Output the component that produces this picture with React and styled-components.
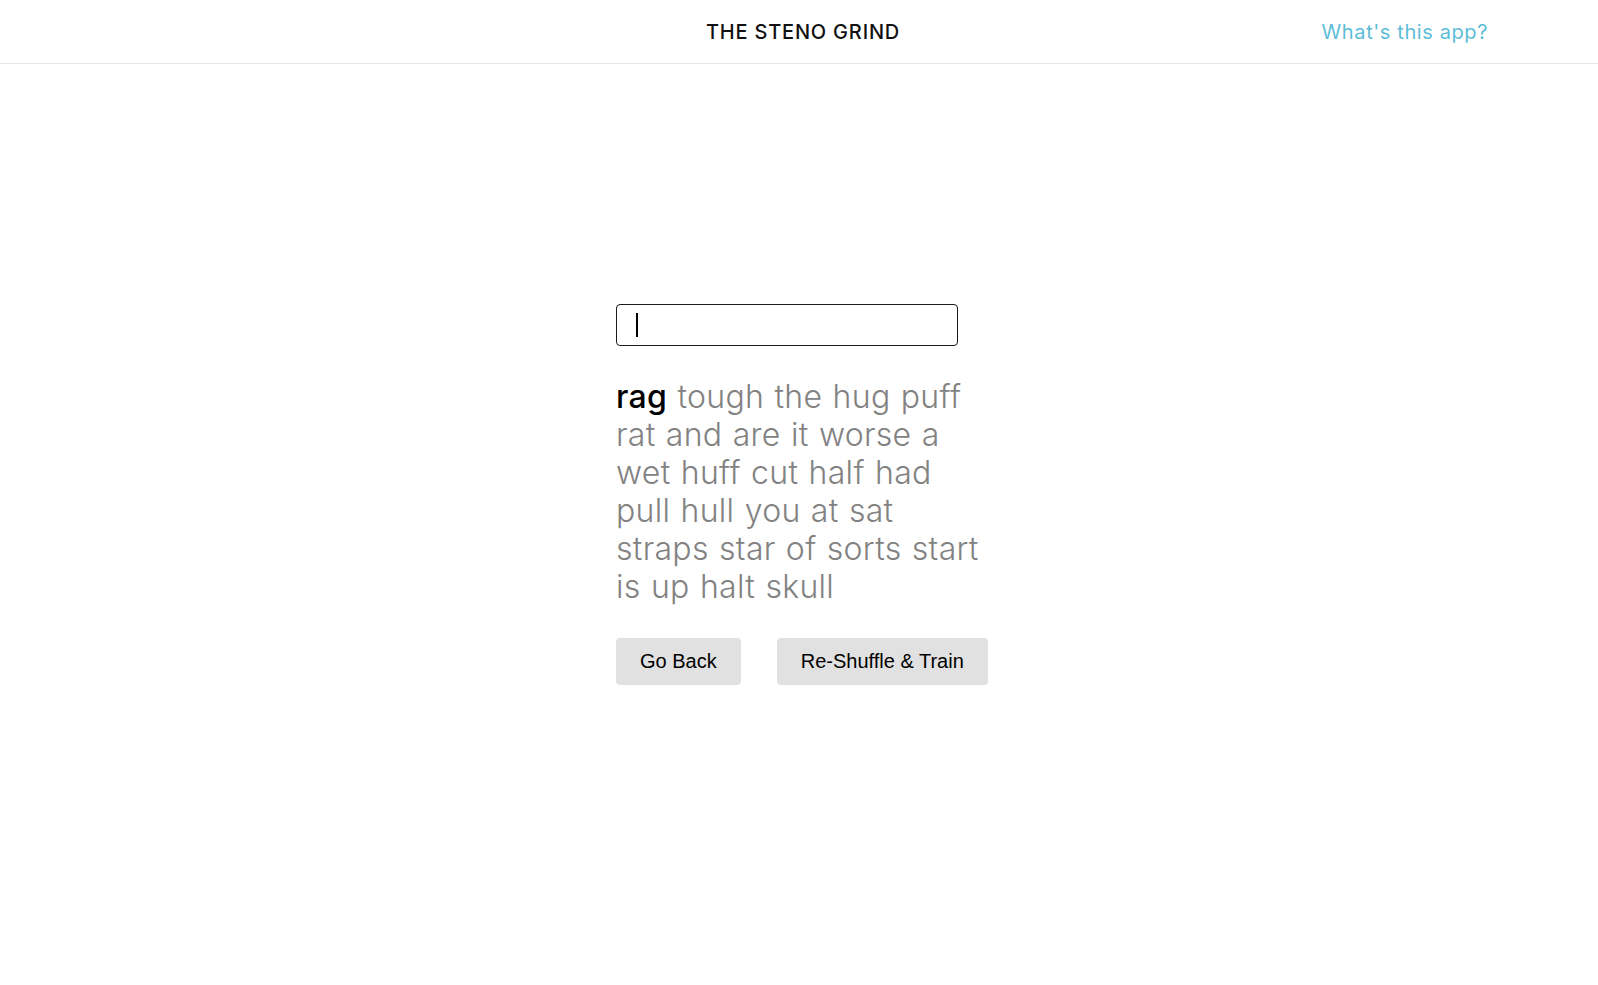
import React from "react";
import styled, { createGlobalStyle } from "styled-components";

const Global = createGlobalStyle`
  html, body { margin: 0; padding: 0; background: #fff; }
  body { font-family: Inter, "Open Sans", sans-serif; }
  * { box-sizing: border-box; }
`;

const Header = styled.header`
  height: 64px;
  border-bottom: 1px solid #e6e6e6;
  display: grid;
  grid-template-columns: 1fr auto 1fr;
  align-items: center;
  padding: 0 110px;
`;

const Title = styled.h1`
  grid-column: 2;
  margin: 0;
  font-family: Inter, sans-serif;
  font-weight: 500;
  font-size: 20px;
  letter-spacing: 0.8px;
  color: #111;
  transform: translateX(4px);
`;

const InfoLink = styled.a`
  grid-column: 3;
  justify-self: end;
  font-family: Inter, sans-serif;
  font-weight: 400;
  font-size: 20px;
  letter-spacing: 0.6px;
  color: #5dbdd7;
  text-decoration: none;
  cursor: pointer;
`;

const Main = styled.main`
  display: flex;
  justify-content: center;
  padding-top: 240px;
`;

const Column = styled.div`
  width: 366px;
  display: flex;
  flex-direction: column;
`;

const EntryWrap = styled.div`
  position: relative;
  width: 342px;
`;

const Entry = styled.input`
  width: 342px;
  height: 42px;
  border: 1px solid #1a1a1a;
  border-radius: 4px;
  padding: 0 20px;
  font-family: Inter, sans-serif;
  font-size: 22px;
  color: #111;
  outline: none;
  caret-color: transparent;
`;

const Caret = styled.span`
  position: absolute;
  left: 20px;
  top: 9px;
  width: 2px;
  height: 24px;
  background: #000;
  pointer-events: none;
`;

const Words = styled.p`
  margin: 32px 0 32px;
  font-family: Inter, sans-serif;
  font-weight: 300;
  font-size: 32px;
  line-height: 38px;
  letter-spacing: 0.3px;
  word-spacing: 1px;
  color: #828282;
`;

const Current = styled.span`
  color: #000;
  font-weight: 500;
`;

const Buttons = styled.div`
  display: flex;
  gap: 36px;
  white-space: nowrap;
`;

const Btn = styled.button`
  height: 47px;
  padding: 0 24px;
  border: none;
  border-radius: 4px;
  background: #e1e1e1;
  font-family: "Liberation Sans", Arial, sans-serif;
  font-size: 20px;
  color: #000;
  cursor: pointer;
`;

const words =
  "tough the hug puff rat and are it worse a wet huff cut half had pull hull you at sat straps star of sorts start is up halt skull";

export default function App() {
  return (
    <>
      <Global />
      <Header>
        <Title>THE STENO GRIND</Title>
        <InfoLink>What's this app?</InfoLink>
      </Header>
      <Main>
        <Column>
          <EntryWrap>
            <Entry autoFocus type="text" />
            <Caret />
          </EntryWrap>
          <Words>
            <Current>rag</Current> {words}
          </Words>
          <Buttons>
            <Btn>Go Back</Btn>
            <Btn>Re-Shuffle &amp; Train</Btn>
          </Buttons>
        </Column>
      </Main>
    </>
  );
}
